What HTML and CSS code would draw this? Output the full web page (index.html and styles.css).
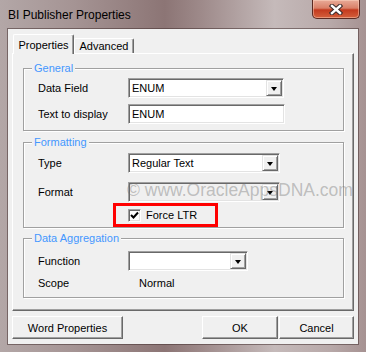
FILE: index.html
```html
<!DOCTYPE html>
<html lang="en">
<head>
    <meta charset="UTF-8">
    <title>BI Publisher Properties</title>
    <link rel="stylesheet" href="styles.css">
</head>
<body>
    <div class="window">
        <div class="titlebar">
            <span class="title">BI Publisher Properties</span>
            <span class="close">
                <svg width="14" height="11" viewBox="0 0 14 11">
                    <path d="M3 2 L11 9 M11 2 L3 9" stroke="#3a2a2a" stroke-width="4.5" stroke-linecap="square" fill="none"/>
                    <path d="M3 2 L11 9 M11 2 L3 9" stroke="#fff" stroke-width="2.4" stroke-linecap="square" fill="none"/>
                </svg>
            </span>
        </div>

        <div class="client">
            <div class="tabs">
                <span class="tab active">Properties</span>
                <span class="tab">Advanced</span>
            </div>

            <div class="page">
                <div class="group general">
                    <span class="legend">General</span>
                    <div class="row">
                        <span class="label">Data Field</span>
                        <div class="combo wide">
                            <span class="value">ENUM</span>
                            <span class="drop"><i class="arrow"></i></span>
                        </div>
                    </div>
                    <div class="row">
                        <span class="label">Text to display</span>
                        <div class="textbox wide">ENUM</div>
                    </div>
                </div>

                <div class="group formatting">
                    <span class="legend">Formatting</span>
                    <div class="row">
                        <span class="label">Type</span>
                        <div class="combo mid">
                            <span class="value">Regular Text</span>
                            <span class="drop"><i class="arrow"></i></span>
                        </div>
                    </div>
                    <div class="row gap-small">
                        <span class="label">Format</span>
                        <div class="combo mid disabled">
                            <span class="value"></span>
                            <span class="drop"><i class="arrow"></i></span>
                        </div>
                    </div>
                    <div class="highlight">
                        <span class="checkbox">
                            <svg width="9" height="9" viewBox="0 0 9 9">
                                <path d="M1 4 L3.5 6.5 L8 1.5" stroke="#000" stroke-width="2" fill="none"/>
                            </svg>
                        </span>
                        <span>Force LTR</span>
                    </div>
                </div>

                <div class="group aggregation">
                    <span class="legend">Data Aggregation</span>
                    <div class="row">
                        <span class="label">Function</span>
                        <div class="combo short">
                            <span class="value"></span>
                            <span class="drop"><i class="arrow"></i></span>
                        </div>
                    </div>
                    <div class="row plain">
                        <span class="label">Scope</span>
                        <span class="static">Normal</span>
                    </div>
                </div>
            </div>

            <div class="buttons">
                <button class="btn word">Word Properties</button>
                <button class="btn ok">OK</button>
                <button class="btn cancel">Cancel</button>
            </div>
        </div>

        <div class="watermark">© www.OracleAppsDNA.com</div>
    </div>
</body>
</html>
```

FILE: styles.css
```css
/* Window frame */
* {
    box-sizing: border-box;
}

body {
    margin: 0;
    width: 366px;
    height: 352px;
    overflow: hidden;
    font-family: "Liberation Sans", Arial, sans-serif;
    font-size: 11px;
    color: #000;
    background: linear-gradient(90deg, #b3a7a7 0%, #a59494 20%, #8c7575 45%, #9e8a8a 55%, #c5baba 75%, #b8a9a9 90%, #a69292 100%);
}

.window {
    position: relative;
    height: 352px;
}

.titlebar {
    display: flex;
    justify-content: space-between;
    height: 29px;
    padding: 0 6px 0 8px;
}

.title {
    font-size: 12px;
    line-height: 14px;
    padding-top: 8px;
}

.close {
    width: 48px;
    height: 19px;
    display: flex;
    align-items: center;
    justify-content: center;
    border: 1px solid #5b2a22;
    border-top: none;
    border-radius: 0 0 5px 5px;
    background: linear-gradient(#e9ab98 0%, #d98068 45%, #c33a1e 55%, #d4603c 100%);
    box-shadow: inset 0 0 0 1px rgba(255, 220, 200, 0.45);
}

.client {
    margin: 0 8px;
    height: 315px;
    padding: 0 4px;
    background: #f0f0f0;
    box-shadow: 0 0 0 1px rgba(70, 50, 50, 0.55);
}

/* Tabs */
.tabs {
    display: flex;
    align-items: flex-end;
    height: 24px;
    padding-left: 1px;
}

.tab {
    display: flex;
    align-items: center;
    justify-content: center;
    width: 60px;
    height: 15px;
    background: #f0f0f0;
    border: 1px solid #fff;
    border-bottom: none;
    border-right-color: #696969;
    border-radius: 2px 2px 0 0;
    box-shadow: inset -1px 0 0 #a0a0a0;
}

.tab.active {
    position: relative;
    z-index: 1;
    width: 61px;
    height: 20px;
    margin-bottom: -1px;
}

.page {
    width: 342px;
    height: 258px;
    padding: 14px 0 0 10px;
    border: 1px solid;
    border-color: #fff #696969 #696969 #fff;
    box-shadow: inset -1px -1px 0 #a0a0a0;
}

/* Group boxes */
.group {
    position: relative;
    width: 321px;
    display: flex;
    flex-direction: column;
    padding-left: 14px;
    border: 1px solid #a0a0a0;
    box-shadow: 1px 1px 0 #fff, inset 1px 1px 0 #fff;
}

.general {
    height: 63px;
    padding-top: 9px;
    gap: 6px;
}

.formatting {
    height: 86px;
    margin-top: 11px;
    padding-top: 10px;
}

.aggregation {
    height: 60px;
    margin-top: 10px;
    padding-top: 12px;
    gap: 5px;
}

.legend {
    position: absolute;
    top: -7px;
    left: 8px;
    padding: 0 2px;
    line-height: 13px;
    color: #4497ff;
    background: #f0f0f0;
}

.row {
    display: flex;
    align-items: center;
    height: 20px;
}

.row.gap-small {
    margin-top: 9px;
}

.row.plain {
    height: 14px;
}

.label {
    width: 90px;
}

.static {
    padding-left: 11px;
}

/* Inputs */
.combo,
.textbox {
    display: flex;
    align-items: center;
    height: 20px;
    background: #fff;
    border: 1px solid;
    border-color: #a0a0a0 #fff #fff #a0a0a0;
    box-shadow: inset 1px 1px 0 #696969, inset -1px -1px 0 #e3e3e3;
    padding: 1px;
}

.textbox {
    padding-left: 3px;
}

.combo.wide {
    width: 156px;
}

.textbox.wide {
    width: 157px;
}

.combo.mid {
    width: 152px;
}

.combo.short {
    width: 120px;
}

.combo.disabled {
    background: #f0f0f0;
}

.value {
    flex: 1;
    padding-left: 2px;
}

.drop {
    display: flex;
    align-items: center;
    justify-content: center;
    width: 16px;
    height: 16px;
    background: #f0f0f0;
    border: 1px solid;
    border-color: #e3e3e3 #696969 #696969 #e3e3e3;
    box-shadow: inset 1px 1px 0 #fff, inset -1px -1px 0 #a0a0a0;
}

.arrow {
    width: 0;
    height: 0;
    margin-top: 1px;
    border-left: 3.5px solid transparent;
    border-right: 3.5px solid transparent;
    border-top: 4px solid #000;
}

/* Force LTR, boxed in red */
.highlight {
    display: flex;
    align-items: center;
    width: 105px;
    height: 24px;
    margin: 1px 0 0 75px;
    padding-left: 12px;
    gap: 5px;
    border: 3px solid #f00;
}

.checkbox {
    display: flex;
    align-items: center;
    justify-content: center;
    width: 13px;
    height: 13px;
    background: #fff;
    border: 1px solid;
    border-color: #a0a0a0 #fff #fff #a0a0a0;
    box-shadow: inset 1px 1px 0 #696969, inset -1px -1px 0 #e3e3e3;
}

/* Buttons */
.buttons {
    display: flex;
    margin-top: 5px;
}

.btn {
    height: 23px;
    padding: 0;
    font-family: inherit;
    font-size: 11px;
    color: #000;
    background: #f0f0f0;
    border: 1px solid;
    border-color: #fff #696969 #696969 #fff;
    box-shadow: inset -1px -1px 0 #a0a0a0;
}

.word {
    width: 111px;
}

.ok {
    width: 76px;
    margin-left: auto;
    margin-right: 1px;
}

.cancel {
    width: 75px;
}

.watermark {
    position: absolute;
    top: 180px;
    left: 127px;
    font-size: 17.5px;
    line-height: 20px;
    white-space: nowrap;
    color: rgba(110, 110, 110, 0.4);
}
```
